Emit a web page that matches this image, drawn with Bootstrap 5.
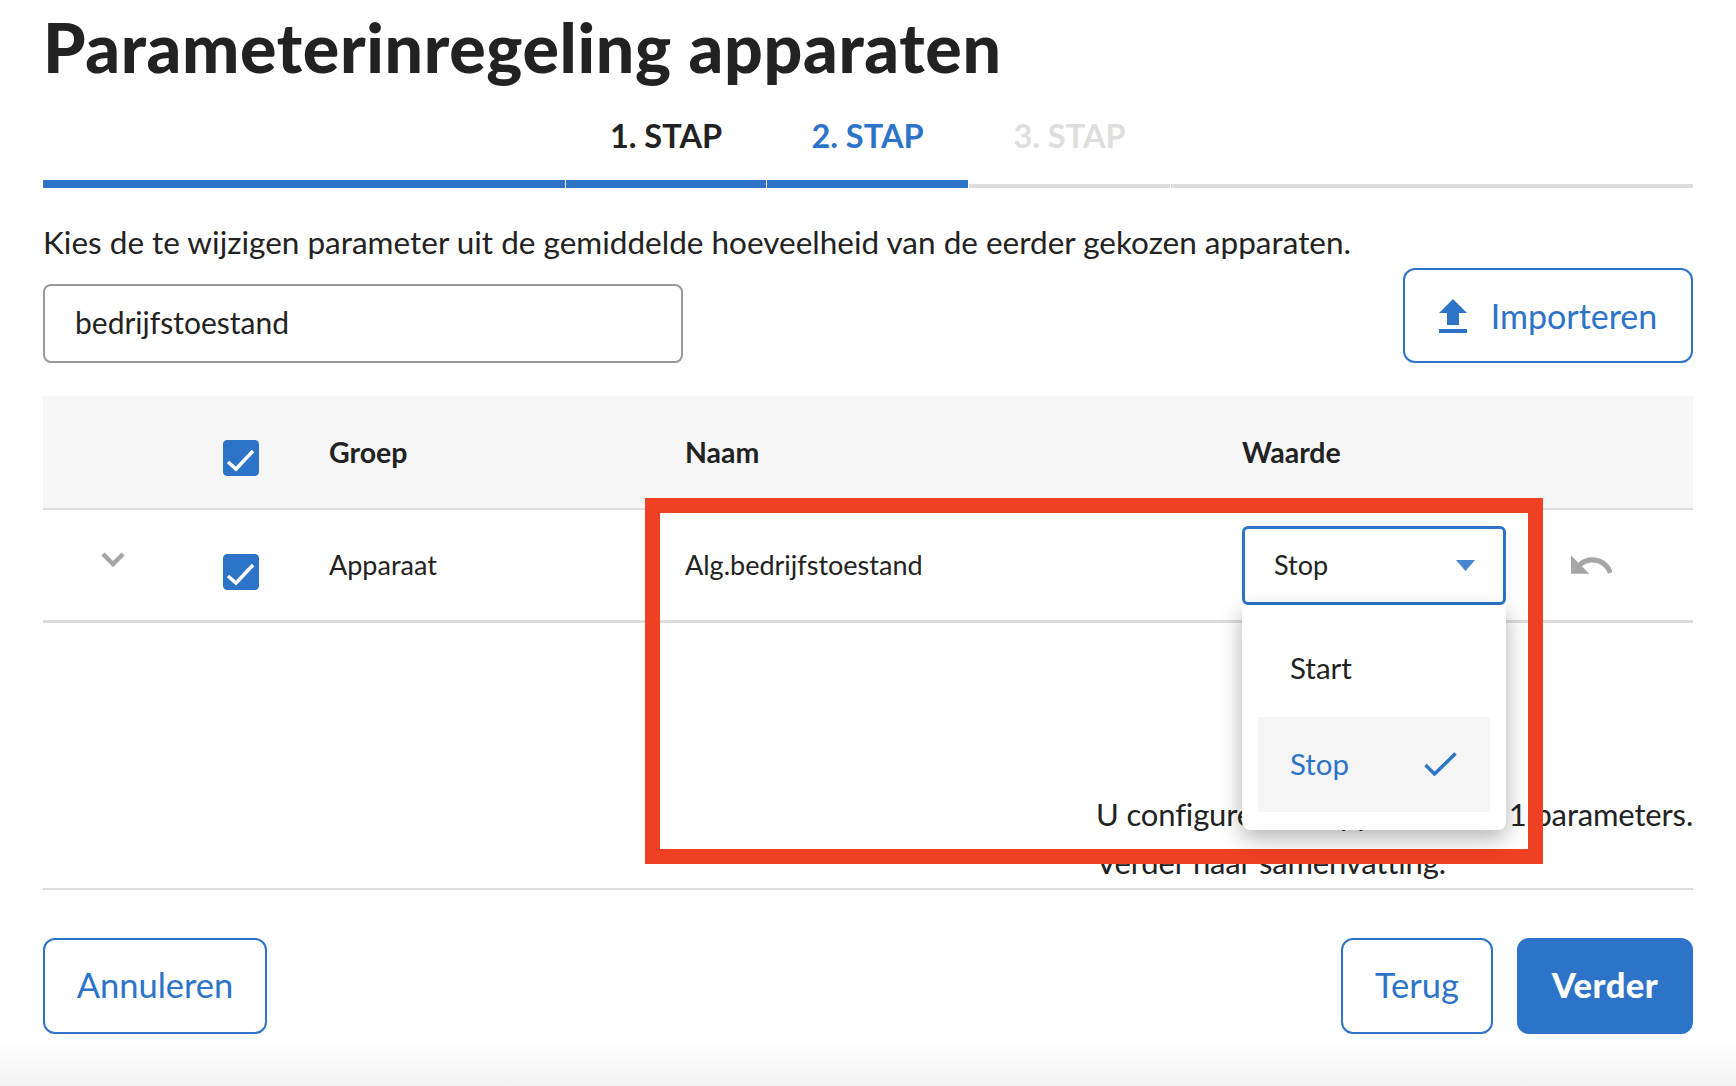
<!DOCTYPE html>
<html lang="nl">
<head>
<meta charset="utf-8">
<title>Parameterinregeling apparaten</title>
<link href="https://cdn.jsdelivr.net/npm/bootstrap@5.3.0/dist/css/bootstrap.min.css" rel="stylesheet">
<style>
:root{--blu:#2d74c9;--ink:#222;}
html,body{height:1086px;overflow:hidden;}
body{font-family:"Lato","Liberation Sans",sans-serif;color:var(--ink);background:#fff;position:relative;}
.page-wrap{padding:0 43px;}
.page-title{font-size:68px;font-weight:900;line-height:94px;margin:0;height:96px;letter-spacing:.65px;}
.stepper{display:grid;grid-template-columns:522px 200px 201px 201px 1fr;column-gap:1px;height:92px;}
.step-cell{display:flex;flex-direction:column;justify-content:flex-end;align-items:center;text-align:center;}
.step-label{font-size:32.500px;font-weight:700;line-height:40px;margin-bottom:24px;}
.step-bar{height:8px;width:100%;background:var(--blu);}
.step-bar.off{height:4px;background:#ddd;}
.label-cur{color:var(--blu);}
.label-off{color:#dedede;margin-bottom:28px;}
.intro{font-size:31.500px;line-height:40px;margin-top:34px;margin-bottom:0;height:40px;}
.tool-row{height:95px;margin-top:6px;}
.search-box.form-control{width:640px;height:79px;border:2px solid #999;border-radius:8px;font-size:30px;padding:0 30px 4px;color:var(--ink);}
.btn-line,.btn-solid{height:96px;font-size:34.500px;font-weight:400;border-radius:12px;border:2px solid var(--blu);display:flex;align-items:center;justify-content:center;padding-bottom:8px;}
.btn-line{color:var(--blu);background:#fff;}
.btn-solid{color:#fff;background:var(--blu);font-weight:900;letter-spacing:.5px;}
.btn-import{width:290px;height:95px;gap:24px;font-size:34px;padding-bottom:6px;}
.btn-cancel{width:224px;}
.btn-back{width:152px;}
.btn-next{width:176px;}
.para-head,.para-row{display:grid;grid-template-columns:180px 106px 356px 557px 329px 1fr;}
.para-head{height:114px;margin-top:33px;background:#f7f7f7;border-bottom:2px solid #ddd;align-items:center;font-size:28.500px;font-weight:700;}
.para-row{height:113px;border-bottom:3px solid #ddd;align-items:center;font-size:27px;}
.para-head .cell-box{padding-top:12px;}
.para-row .cell-box{padding-top:13px;}
.cell-chev{padding-left:58px;padding-bottom:11px;display:flex;}
.cell-box .form-check-input{width:36px;height:36px;margin:0;background-color:var(--blu);border-color:var(--blu);border-radius:4px;display:block;
  background-size:36px 36px;background-image:url("data:image/svg+xml,%3csvg xmlns='http://www.w3.org/2000/svg' viewBox='0 0 36 36'%3e%3cpath fill='none' stroke='%23fff' stroke-width='3.500' d='M5 22l8 7L30 11'/%3e%3c/svg%3e");}
.val-wrap{width:264px;position:relative;}
.val-select{width:264px;height:79px;border:3px solid var(--blu);border-radius:6px;background:#fff;padding:0 28px 0 29px;font-size:27px;color:var(--ink);}
.val-menu.dropdown-menu{position:absolute;top:79px;left:0;width:264px;height:225px;margin:0;padding:17px 16px 16px;border:0;border-radius:0 0 8px 8px;box-shadow:0 8px 22px rgba(0,0,0,.3);z-index:5;}
.val-menu .dropdown-item{height:95px;padding:0 33px 0 32px;font-size:29.500px;color:var(--ink);display:flex;align-items:center;justify-content:space-between;}
.val-menu li:first-child .dropdown-item{padding-bottom:2px;}
.val-menu .dropdown-item.active{background:#f5f5f5;color:var(--blu);}
.undo-ico{display:block;margin-top:-2px;}
.summary-area{height:267px;border-bottom:2px solid #ddd;display:flex;justify-content:flex-end;}
.summary-text{width:597px;font-size:31px;line-height:48px;margin-top:167px;margin-bottom:0;white-space:nowrap;letter-spacing:-.15px;}
.foot-row{margin-top:48px;}
.page-fade{position:absolute;left:0;right:0;bottom:0;height:46px;background:linear-gradient(#fff,#f3f3f3);}
.note-frame{position:absolute;left:645px;top:498px;width:898px;height:366px;border:15px solid #ef4023;z-index:4;pointer-events:none;}
</style>
</head>
<body>
<div class="page-wrap">
  <h1 class="page-title">Parameterinregeling apparaten</h1>
  <div class="stepper">
    <div class="step-cell"><div class="step-bar"></div></div>
    <div class="step-cell"><div class="step-label">1. STAP</div><div class="step-bar"></div></div>
    <div class="step-cell"><div class="step-label label-cur">2. STAP</div><div class="step-bar"></div></div>
    <div class="step-cell"><div class="step-label label-off">3. STAP</div><div class="step-bar off"></div></div>
    <div class="step-cell"><div class="step-bar off"></div></div>
  </div>
  <p class="intro">Kies de te wijzigen parameter uit de gemiddelde hoeveelheid van de eerder gekozen apparaten.</p>
  <div class="tool-row d-flex justify-content-between align-items-end">
    <input class="form-control search-box" type="text" value="bedrijfstoestand">
    <button class="btn btn-line btn-import" type="button">
      <svg width="28" height="34" viewBox="5 3 14 17" fill="#2d74c9"><path d="M5 20h14v-2H5v2zm0-10h4v6h6v-6h4l-7-7-7 7z"/></svg>
      <span>Importeren</span>
    </button>
  </div>
  <div class="para-head">
    <div></div>
    <div class="cell-box"><input class="form-check-input" type="checkbox" checked aria-label="Alles"></div>
    <div>Groep</div>
    <div>Naam</div>
    <div>Waarde</div>
    <div></div>
  </div>
  <div class="para-row">
    <div class="cell-chev"><svg width="24" height="16" viewBox="0 0 24 16" fill="none" stroke="#a6a6a6" stroke-width="4.500"><path d="M2 2l10 10L22 2"/></svg></div>
    <div class="cell-box"><input class="form-check-input" type="checkbox" checked aria-label="Apparaat"></div>
    <div>Apparaat</div>
    <div>Alg.bedrijfstoestand</div>
    <div class="val-wrap">
      <button class="btn val-select d-flex justify-content-between align-items-center" type="button">
        <span>Stop</span>
        <svg width="19" height="11" viewBox="0 0 19 11" fill="#4a86cf"><path d="M0 0h19l-9.500 11z"/></svg>
      </button>
      <ul class="dropdown-menu show val-menu">
        <li><a class="dropdown-item" href="#">Start</a></li>
        <li><a class="dropdown-item active" href="#">Stop
          <svg width="33" height="24" viewBox="0 0 33 24" fill="none" stroke="#2d74c9" stroke-width="3.500"><path d="M1.500 13l9 9L31.500 1.500"/></svg></a></li>
      </ul>
    </div>
    <div><svg class="undo-ico" width="41" height="19" viewBox="2 7 20.100 9" fill="#a6a6a6"><path d="M12.500 8c-2.650 0-5.050.99-6.900 2.600L2 7v9h9l-3.620-3.620c1.390-1.160 3.160-1.880 5.120-1.880 3.540 0 6.550 2.310 7.600 5.500l2.370-.78C21.080 11.030 17.150 8 12.500 8z"/></svg></div>
  </div>
  <div class="summary-area">
    <p class="summary-text">U configureert 5 apparaten en 1 parameters.<br>Verder naar samenvatting.</p>
  </div>
  <div class="foot-row d-flex justify-content-between">
    <button class="btn btn-line btn-cancel" type="button">Annuleren</button>
    <div class="d-flex gap-4">
      <button class="btn btn-line btn-back" type="button">Terug</button>
      <button class="btn btn-solid btn-next" type="button">Verder</button>
    </div>
  </div>
</div>
<div class="note-frame"></div>
<div class="page-fade"></div>
<script src="https://cdn.jsdelivr.net/npm/bootstrap@5.3.0/dist/js/bootstrap.bundle.min.js"></script>
</body>
</html>
